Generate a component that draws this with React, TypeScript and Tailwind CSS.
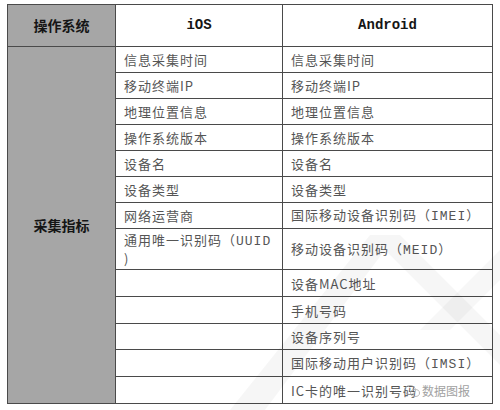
import React from "react";

const M = "font-['Liberation_Mono',monospace]";

const rows: { ios: React.ReactNode; android: React.ReactNode; h: string }[] = [
  { ios: "信息采集时间", android: "信息采集时间", h: "h-[26px]" },
  { ios: "移动终端IP", android: "移动终端IP", h: "h-[26px]" },
  { ios: "地理位置信息", android: "地理位置信息", h: "h-[26px]" },
  { ios: "操作系统版本", android: "操作系统版本", h: "h-[26px]" },
  { ios: "设备名", android: "设备名", h: "h-[26px]" },
  { ios: "设备类型", android: "设备类型", h: "h-[26px]" },
  {
    ios: "网络运营商",
    android: (
      <>
        国际移动设备识别码（<span className="font-['Liberation_Mono',monospace]">IMEI</span>）
      </>
    ),
    h: "h-[26px]",
  },
  {
    ios: (
      <>
        通用唯一识别码（<span className="font-['Liberation_Mono',monospace]">UUID</span>
        <br />)
      </>
    ),
    android: (
      <>
        移动设备识别码（<span className="font-['Liberation_Mono',monospace]">MEID</span>）
      </>
    ),
    h: "h-[41px]",
  },
  { ios: "", android: "设备MAC地址", h: "h-[27px]" },
  { ios: "", android: "手机号码", h: "h-[27px]" },
  { ios: "", android: "设备序列号", h: "h-[26px]" },
  {
    ios: "",
    android: (
      <>
        国际移动用户识别码（<span className="font-['Liberation_Mono',monospace]">IMSI</span>）
      </>
    ),
    h: "h-[27px]",
  },
  { ios: "", android: "IC卡的唯一识别号码", h: "h-[27px]" },
];

export default function App() {
  return (
    <div className="relative w-[500px] h-[410px] bg-white overflow-hidden font-['Noto_Sans_CJK_SC','Noto_Sans',sans-serif]">
      <div className="pt-[4px] pl-[7px]">
        <table className="table-fixed border-collapse w-[485px] text-[13px] text-[#555]">
          <colgroup>
            <col className="w-[108px]" />
            <col className="w-[167px]" />
            <col className="w-[210px]" />
          </colgroup>
          <tbody>
            <tr>
              <td className="h-[42px] border border-[#4a4a4a] bg-[#a6a6a6] text-center font-bold text-[#151515] text-[14px]">
                操作系统
              </td>
              <td className={`border border-[#4a4a4a] text-center font-bold text-[#151515] text-[14px] ${M}`}>
                iOS
              </td>
              <td className={`border border-[#4a4a4a] text-center font-bold text-[#151515] text-[14px] ${M}`}>
                Android
              </td>
            </tr>
            {rows.map((r, i) => (
              <tr key={i}>
                {i === 0 && (
                  <td
                    rowSpan={rows.length}
                    className="border border-[#4a4a4a] bg-[#a6a6a6] text-center font-bold text-[#151515] text-[14px]"
                  >
                    采集指标
                  </td>
                )}
                <td
                  className={`border border-[#4a4a4a] pl-[8px] pr-[2px] leading-[17px] tracking-[1px] whitespace-nowrap ${r.h}`}
                >
                  {r.ios}
                </td>
                <td className="border border-[#4a4a4a] pl-[8px] pr-[2px] leading-[17px] tracking-[1px] whitespace-nowrap">
                  {r.android}
                </td>
              </tr>
            ))}
          </tbody>
        </table>
      </div>
      <svg
        className="absolute inset-0 pointer-events-none"
        width="500"
        height="410"
        viewBox="0 0 500 410"
      >
        <polygon points="370,235 400,235 500,335 500,365 385,250 265,410 230,410" fill="#000" opacity="0.035" />
        <polygon points="420,330 500,250 500,280 450,330" fill="#000" opacity="0.03" />
      </svg>
      <div className="absolute left-[404px] top-[382px] flex items-center gap-[2px] text-[12px] text-[#8a8a8a] opacity-80">
        <svg width="16" height="14" viewBox="0 0 16 14">
          <ellipse cx="6" cy="6" rx="5.5" ry="4.5" fill="none" stroke="#aaa" strokeWidth="1" />
          <ellipse cx="11" cy="9" rx="4.5" ry="3.5" fill="none" stroke="#aaa" strokeWidth="1" />
        </svg>
        <span>数据图报</span>
      </div>
    </div>
  );
}
